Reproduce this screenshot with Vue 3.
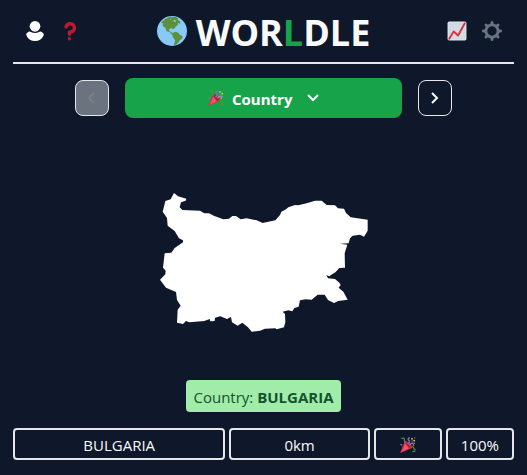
<script setup>
import { ref } from 'vue'

const mode = ref('Country')
const modes = ['Country']
const grid = [9, 14, 19, 24, 29]
const teeth = [0, 45, 90, 135, 180, 225, 270, 315]
</script>

<template>
  <div class="page">
    <svg class="defs" width="0" height="0" aria-hidden="true">
      <symbol id="party" viewBox="0 0 36 36">
        <path fill="#dd2e44" d="M11 9L1 33.500Q0 36 3 35L27 25Z" />
        <path fill="#ea596e" d="M13 13L6 29L2 34.500L19 26Z" />
        <path fill="#be1931" d="M11 9C16 7 29 19 27 25C22 27 10 16 11 9Z" />
        <path fill="none" stroke="#5c913b" stroke-width="2.600" stroke-linecap="round" d="M4 3Q11 1 10 6T13 12M25 23Q30 20 31 25T34 28M29 33L34 32" />
        <path fill="none" stroke="#9266cc" stroke-width="3" stroke-linecap="round" d="M18 15Q24 11 20 8T21 2M2 17L4 18" />
        <path fill="none" stroke="#aa8dd8" stroke-width="2.600" stroke-linecap="round" d="M22 18Q25 12 33 14" />
        <circle cx="27" cy="4" r="2" fill="#ffcc4d" />
        <circle cx="32" cy="8" r="2" fill="#ffcc4d" />
        <circle cx="27" cy="9" r="1.600" fill="#5c913b" />
        <circle cx="33" cy="2" r="1.600" fill="#5c913b" />
        <circle cx="30" cy="18" r="1.600" fill="#ffcc4d" />
      </symbol>
    </svg>

    <header class="header">
      <div class="tools">
        <button class="icon" aria-label="Profile">
          <svg viewBox="0 0 60 60" fill="#fff">
            <circle cx="30" cy="16" r="16" />
            <path d="M11 32Q15 30 18 33Q30 39 42 33Q45 30 49 32L55 37Q58 40 55 45Q48 60 30 60Q12 60 5 45Q2 40 5 37Z" />
          </svg>
        </button>
        <button class="icon" aria-label="How to play">
          <svg viewBox="0 0 36 36" fill="#be1931">
            <path d="M17 27c-1.657 0-3-1.343-3-3v-4c0-1.657 1.343-3 3-3 .603-.006 6-1 6-5 0-2-2-4-5-4-2.441 0-4 2-4 3 0 1.657-1.343 3-3 3s-3-1.343-3-3c0-4.878 4.580-9 10-9 8 0 11 5.982 11 11 0 4.145-2.277 7.313-6.413 8.920-.9.351-1.790.587-2.587.747V24c0 1.657-1.343 3-3 3z" />
            <circle cx="17" cy="32" r="3" />
          </svg>
        </button>
      </div>
      <h1 class="title">
        <svg class="globe" viewBox="0 0 90 90" aria-hidden="true">
          <circle cx="45" cy="45" r="45" fill="#88c9f9" />
          <path fill="#5c913b" d="M12 21Q24 6 41 2L47 4L55 3L63 7L62 12L69 16L70 23L62 21L63 28L56 31L54 36L47 40L45 36L37 39L36 45L42 48L49 53L51 58L45 56L39 49L29 46L25 36L17 29L18 22Z" />
          <path fill="#5c913b" d="M48 50L55 47L64 50L68 56L77 61L75 68L69 72L64 80L57 86L50 87L53 80L54 72L48 64L46 57Z" />
          <path fill="#88c9f9" d="M51 11L58 14L55 18L49 16ZM38 9L43 8L41 12Z" />
        </svg>
        <span class="name">WOR<span class="accent">L</span>DLE</span>
      </h1>
      <div class="tools">
        <button class="icon" aria-label="Statistics">
          <svg viewBox="0 0 36 36">
            <rect x="1" y="1" width="34" height="34" rx="3" fill="#e1e8ed" />
            <rect x="3" y="3" width="30" height="30" fill="#ccd6dd" />
            <path v-for="p in grid" :key="p" :d="`M${p} 3V33M3 ${p}H33`" stroke="#e1e8ed" stroke-width="1" />
            <path d="M4 32L12 19L20 26L32 4" fill="none" stroke="#dd2e44" stroke-width="3.400" stroke-linejoin="round" stroke-linecap="round" />
          </svg>
        </button>
        <button class="icon" aria-label="Settings">
          <svg viewBox="0 0 36 36">
            <circle cx="18" cy="18" r="11" fill="none" stroke="#66757f" stroke-width="5" />
            <path v-for="a in teeth" :key="a" d="M14 7L15.500 4V2Q16 0 18 0Q20 0 20.500 2V4L22 7Z" :transform="`rotate(${a} 18 18)`" fill="#66757f" />
          </svg>
        </button>
      </div>
    </header>

    <main>
      <div class="picker">
        <button class="step" aria-label="Previous round" disabled>
          <svg viewBox="0 0 12 12"><path d="M8 1L3 6L8 11" /></svg>
        </button>
        <label class="mode">
          <svg class="party" aria-hidden="true"><use href="#party" /></svg>
          <select v-model="mode" aria-label="Round">
            <option v-for="m in modes" :key="m">{{ m }}</option>
          </select>
          <svg class="chevron" viewBox="0 0 12 12" aria-hidden="true"><path d="M1 3L6 8L11 3" /></svg>
        </label>
        <button class="step" aria-label="Next round">
          <svg viewBox="0 0 12 12"><path d="M3 1L8 6L3 11" /></svg>
        </button>
      </div>

      <div class="map">
        <svg viewBox="30 24 624 417" role="img" aria-label="Country outline">
          <path fill="#fff" d="M72 24L84 34L109 41L107 47L93 52L89 67L97 75L150 77L163 85L177 85L193 93L220 103L237 101L247 93L258 93L272 103L290 100L320 106L338 114L376 106L390 90L394 80L408 73L415 67L435 60L445 61L470 55L495 47L515 47L530 60L555 61L564 70L582 71L588 84L602 97L653 104L653 137L642 155L630 149L608 152L600 160L596 175L570 176L592 179L584 205L585 248L568 249L556 262L543 270L538 274L529 270L534 280L555 282L568 293L572 300L566 308L580 320L593 344L565 348L552 354L534 345L524 329L503 329L485 344L467 343L450 346L446 365L433 369L427 379L415 376L398 380L405 387L406 411L402 427L380 433L376 430L345 431L330 437L305 440L294 427L277 413L263 422L246 412L243 396L231 402L211 394L195 398L194 408L181 409L179 402L163 408L118 412L108 408L99 417L81 413L83 374L92 362L81 345L78 321L48 308L30 284L46 268L47 257L39 248L44 205L64 203L74 189L99 172L99 166L87 160L74 138L53 122L51 99L38 80L46 48L62 43Z" />
        </svg>
      </div>

      <p class="answer">Country: <strong>BULGARIA</strong></p>

      <ul class="guess">
        <li>BULGARIA</li>
        <li>0km</li>
        <li><svg class="party" role="img" aria-label="Correct"><use href="#party" /></svg></li>
        <li>100%</li>
      </ul>
    </main>
  </div>
</template>

<style>
body {
  margin: 0;
  background: #0f172a;
}
</style>

<style scoped>
.page {
  padding: 0 13px;
  color: #f8fafc;
  font: 15px/24px "Open Sans", "Noto Sans", sans-serif;
}
.defs {
  display: block;
}
button {
  padding: 0;
  border: 0;
  background: none;
  color: inherit;
}
.header {
  display: flex;
  align-items: center;
  justify-content: space-between;
  height: 62px;
  padding: 0 12px;
  border-bottom: 2px solid #e5e7eb;
}
.tools {
  display: flex;
  gap: 15px;
}
.icon,
.icon svg {
  display: block;
  width: 20px;
  height: 20px;
}
.title {
  display: flex;
  align-items: center;
  gap: 9px;
  margin: 0;
  font-size: 36px;
  font-weight: 700;
  line-height: 40px;
}
.name {
  padding-top: 4px;
}
.globe {
  width: 30px;
  height: 30px;
}
.accent {
  color: #16a34a;
}
.picker {
  display: flex;
  align-items: center;
  gap: 16px;
  margin-top: 14px;
  padding: 0 62px;
}
.step {
  display: flex;
  align-items: center;
  justify-content: center;
  box-sizing: border-box;
  width: 34px;
  height: 36px;
  border: 1px solid #e5e7eb;
  border-radius: 8px;
}
.step:disabled {
  background: #6b7280;
  color: #7f7f7f;
}
.step svg,
.chevron {
  width: 12px;
  height: 12px;
  fill: none;
  stroke: currentColor;
  stroke-width: 2;
}
.mode {
  display: flex;
  flex: 1;
  align-items: center;
  justify-content: center;
  height: 40px;
  border-radius: 8px;
  background: #16a34a;
}
.mode select {
  appearance: none;
  margin: 0 14px 0 8px;
  padding: 2px 0 0;
  border: 0;
  background: none;
  color: #fff;
  font: inherit;
  font-weight: 700;
}
.party {
  display: block;
  width: 16px;
  height: 16px;
}
.map {
  display: flex;
  justify-content: center;
  padding: 75px 0 48px;
}
.map svg {
  width: 208px;
  height: 139px;
}
.answer {
  width: fit-content;
  margin: 0 auto 16px;
  padding: 5px 7px 3px;
  border-radius: 4px;
  background: #a0eca8;
  color: #14532d;
}
.answer strong {
  font-weight: 700;
}
.guess {
  display: grid;
  grid-template-columns: repeat(7, 1fr);
  gap: 4px;
  margin: 0;
  padding: 0;
  list-style: none;
}
.guess li {
  display: flex;
  align-items: center;
  justify-content: center;
  box-sizing: border-box;
  height: 32px;
  padding-top: 2px;
  border: 2px solid #e5e7eb;
  border-radius: 4px;
}
.guess li:nth-child(1) {
  grid-column: span 3;
}
.guess li:nth-child(2) {
  grid-column: span 2;
}
</style>
